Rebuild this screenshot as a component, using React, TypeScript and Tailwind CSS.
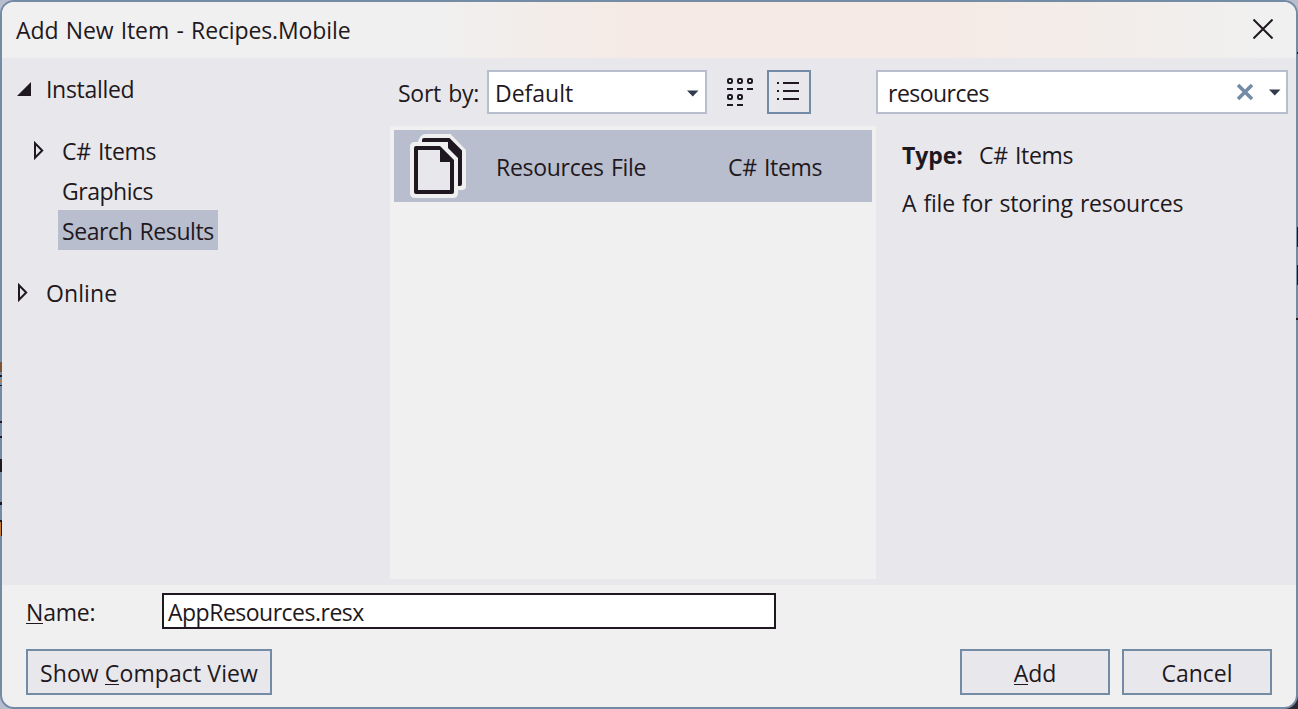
import React from "react";

function Triangle({ open = false }: { open?: boolean }) {
  return open ? (
    <svg width="14" height="14" viewBox="0 0 14 14" className="block">
      <path d="M14 0V14H0Z" fill="#1f1820" />
    </svg>
  ) : (
    <svg width="11" height="19" viewBox="0 0 11 19" className="block">
      <path d="M2 2.2V16.8L9.2 9.5Z" fill="none" stroke="#1f1820" strokeWidth="2" />
    </svg>
  );
}

function Caret() {
  return (
    <svg width="12" height="7" viewBox="0 0 12 7" className="block">
      <path d="M0 0.5H11.5L5.75 6.5Z" fill="#323b4b" />
    </svg>
  );
}

function FilesIcon() {
  return (
    <svg width="56" height="64" viewBox="0 0 56 64" className="block">
      <path
        d="M16 0H40.5L56 16V52Q56 56 52 56H48V59Q48 64 43 64H5Q0 64 0 59V13Q0 8 5 8H8Q9 4 11 2Q13 0 16 0Z"
        fill="#f0f0f0"
      />
      <path d="M12 8V6Q12 4 14 4H39.5L52 16.5V50Q52 52 50 52H48V24L38 14V8Z" fill="#1f1820" />
      <path d="M6 12H30L44 26V58Q44 60 42 60H6Q4 60 4 58V14Q4 12 6 12Z" fill="#1f1820" />
      <path d="M8 16H30V28H40V56H8Z" fill="#e8e8ec" />
    </svg>
  );
}

function GridIcon() {
  const cells = [
    [0, 0], [10, 0], [20, 0], [0, 16], [10, 16],
  ];
  return (
    <svg width="26" height="28" viewBox="0 0 26 28" className="block">
      {cells.map(([x, y]) => (
        <g key={`${x}-${y}`}>
          <rect x={x + 1} y={y + 1} width="4" height="4" rx="1.2" fill="none" stroke="#1f1820" strokeWidth="2" />
          <rect x={x} y={y + 10} width="6" height="2" fill="#1f1820" />
        </g>
      ))}
    </svg>
  );
}

function ListIcon() {
  return (
    <svg width="22" height="18" viewBox="0 0 22 18" className="block">
      <path d="M0 1H2M6 1H22M0 9H2M6 9H22M0 17H2M6 17H22" stroke="#1f1820" strokeWidth="2" />
    </svg>
  );
}

function Mnemonic({ children }: { children: string }) {
  return <span className="inline-block h-[25px] border-b border-[#1f1820] leading-[27px]">{children}</span>;
}

// Slivers of the desktop that show through along the window's edges.
function EdgeMarks() {
  return (
    <>
      <i className="absolute top-[362px] left-0 h-[10px] w-[2px] bg-[#7d5433]" />
      <i className="absolute top-[375px] left-0 h-[2px] w-[2px] bg-[#1f1820]" />
      <i className="absolute top-[380px] left-0 h-[2px] w-[2px] bg-[#c47b38]" />
      <i className="absolute top-[385px] left-0 h-px w-[2px] bg-[#1f1820]" />
      <i className="absolute top-[421px] left-0 h-[2px] w-[2px] bg-[#1f1820]" />
      <i className="absolute top-[423px] left-px h-[13px] w-px bg-[#c47b38]" />
      <i className="absolute top-[436px] left-0 h-[2px] w-[2px] bg-[#1f1820]" />
      <i className="absolute top-[459px] left-0 h-[13px] w-[2px] bg-[#1f1820]" />
      <i className="absolute top-[502px] left-0 h-[3px] w-[2px] bg-[#1f1820]" />
      <i className="absolute top-[520px] left-0 h-[2px] w-[2px] bg-[#1f1820]" />
      <i className="absolute top-[522px] left-0 h-[14px] w-px bg-[#c47b38]" />
      <i className="absolute top-[522px] left-px h-[14px] w-px bg-[#1f1820]" />
      <i className="absolute top-[52px] right-0 h-[2px] w-px bg-[#1f1820]" />
      <i className="absolute top-[227px] right-0 h-5 w-px bg-[#1f1820]" />
      <i className="absolute top-[265px] right-0 h-5 w-px bg-[#1f1820]" />
      <i className="absolute top-[318px] right-0 h-[2px] w-[2px] bg-[#1f1820]" />
    </>
  );
}

const button =
  "flex h-[46px] items-start justify-center border-2 border-[#748ba6] bg-[#e8e8ec] pt-[1px] leading-[42px]";

export default function App() {
  return (
    <div className="relative h-[709px] w-[1298px] overflow-hidden bg-[linear-gradient(135deg,#b8bece_0%,#b8bece_96%,#2a2733_99%)]">
      <div className="flex h-[709px] w-[1298px] flex-col overflow-hidden rounded-[14px] border-2 border-[#748ba6] bg-[#f0f0f0] font-['Open_Sans',sans-serif] text-[23px] leading-[42px] whitespace-nowrap text-[#1f1820] [word-spacing:1.5px]">
        <header className="flex h-14 shrink-0 items-start justify-between bg-[linear-gradient(90deg,#f0f0f0_0%,#f0f0f0_33%,#f5eae5_49%,#f5eae5_73%,#f0f0f0_98%)] pt-[7px] pr-[23px] pl-[14px]">
          <h1 className="tracking-[-0.12px]">Add New Item - Recipes.Mobile</h1>
          <button aria-label="Close" className="mt-[10px]">
            <svg width="20" height="20" viewBox="0 0 20 20" className="block">
              <path d="M0.5 0.5L19.5 19.5M19.5 0.5L0.5 19.5" stroke="#1f1820" strokeWidth="2" />
            </svg>
          </button>
        </header>

        <main className="flex h-[527px] shrink-0 bg-[#e8e8ec]">
          <nav className="w-[388px] shrink-0 pt-[10px]">
            <div className="flex h-[62px] pl-[15px]">
              <span className="w-[29px] pt-[14px]"><Triangle open /></span>
              <span className="tracking-[-0.3px]">Installed</span>
            </div>
            <div className="flex h-10 pl-[31px]">
              <span className="w-[29px] pt-[11px]"><Triangle /></span>
              <span className="tracking-[-0.3px]">C# Items</span>
            </div>
            <div className="h-10 pl-[60px] tracking-[-0.48px]">Graphics</div>
            <div className="ml-[56px] h-10 w-40 bg-[#b8bece] pl-1 tracking-[-0.4px]">Search Results</div>
            <div className="mt-[22px] flex h-10 pl-[15px]">
              <span className="w-[29px] pt-[11px]"><Triangle /></span>
              <span className="tracking-[0.1px]">Online</span>
            </div>
          </nav>

          <section className="w-[486px] shrink-0">
            <div className="flex h-[68px] pt-3 pl-2">
              <span className="w-[89px] pt-[2px] tracking-[-0.25px]">Sort by:</span>
              <div className="flex h-11 w-[220px] justify-between border-2 border-[#b8bece] bg-white pr-[6px] pl-[6px]">
                <span>Default</span>
                <span className="pt-[18px]"><Caret /></span>
              </div>
              <span className="ml-5 pt-2"><GridIcon /></span>
              <span className="ml-[14px] flex h-11 w-11 justify-start border-2 border-[#748ba6] pt-[10px] pl-2"><ListIcon /></span>
            </div>
            <div className="h-[453px] bg-[#f0f0f0] p-1">
              <div className="flex h-[72px] bg-[#b8bece] pl-4">
                <span className="w-[86px] pt-1"><FilesIcon /></span>
                <span className="w-[232px] pt-4 tracking-[-0.28px]">Resources File</span>
                <span className="pt-4 tracking-[-0.3px]">C# Items</span>
              </div>
            </div>
          </section>

          <aside className="pt-3">
            <div className="flex h-11 w-[412px] border-2 border-[#b8bece] bg-white pl-[10px]">
              <span className="w-[348px] tracking-[-0.52px]">resources</span>
              <svg width="18" height="18" viewBox="0 0 18 18" className="mt-[11px] block">
                <path d="M2 2L16 16M16 2L2 16" stroke="#748ba6" strokeWidth="3.6" />
              </svg>
              <span className="ml-[15px] pt-[17px]"><Caret /></span>
            </div>
            <div className="mt-5 flex h-12 pl-[26px]">
              <b className="w-[77px] tracking-[-0.1px]">Type:</b>
              <span className="tracking-[-0.3px]">C# Items</span>
            </div>
            <p className="pl-[26px] tracking-[-0.24px]">A file for storing resources</p>
          </aside>
        </main>

        <footer className="px-6 pt-2">
          <div className="flex h-[56px]">
            <label className="-mt-[2px] w-[136px] tracking-[-0.2px]"><Mnemonic>N</Mnemonic>ame:</label>
            <div className="h-9 w-[614px] border-2 border-[#1f1820] bg-white pl-1 leading-[35px] tracking-[-0.5px]">AppResources.resx</div>
          </div>
          <div className="flex">
            <button className={`${button} w-[246px] tracking-[0.1px]`}><span>Show <Mnemonic>C</Mnemonic>ompact View</span></button>
            <button className={`${button} ml-auto w-[150px] tracking-[-0.1px]`}><span><Mnemonic>A</Mnemonic>dd</span></button>
            <button className={`${button} ml-3 w-[150px] tracking-[0px]`}>Cancel</button>
          </div>
        </footer>
      </div>
      <EdgeMarks />
    </div>
  );
}
